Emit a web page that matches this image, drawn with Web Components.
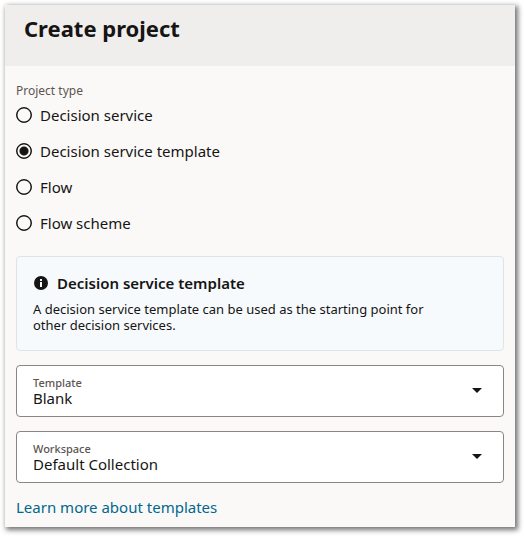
<!DOCTYPE html>
<html lang="en">
<head>
<meta charset="utf-8">
<meta name="viewport" content="width=device-width, initial-scale=1">
<title>Create project</title>
<style>
body{
    margin: 0;
    padding: 5px 9px 9px 5px;
    background: white;
    color: #161513;
    font: 15px/20px "Noto Sans", "Open Sans", sans-serif;
}
</style>
</head>
<body>
<project-drawer>
    <span slot="title">Create project</span>
    <radio-set label="Project type" name="type" value="template" items='[
        {"id": "service", "value": "Decision service"},
        {"id": "template", "value": "Decision service template"},
        {"id": "flow", "value": "Flow"},
        {"id": "scheme", "value": "Flow scheme"}
    ]'></radio-set>
    <info-box>
        <span slot="title">Decision service template</span>
        A decision service template can be used as the starting point for other decision services.
    </info-box>
    <select-field label="Template" items='["Blank"]'></select-field>
    <select-field label="Workspace" items='["Default Collection"]'></select-field>
    <help-link href="#templates">Learn more about templates</help-link>
</project-drawer>

<script>
customElements.define("project-drawer", class ProjectDrawer extends HTMLElement{
    constructor(){
        super()
        this.shadow = this.attachShadow({mode: "open"})
        this.shadow.innerHTML = `
            <style>
            :host{
                display: block;
                background: #fbf9f8;
                box-shadow: 2px 2px 5px 1px rgba(0, 0, 0, .55);
            }
            header{
                background: #f0eeed;
                padding: 7px 19px 22px;
            }
            h1{
                margin: 0;
                font-size: 22px;
                line-height: 32px;
                font-weight: 700;
            }
            main{
                display: flex;
                flex-direction: column;
                gap: 14px;
                padding: 16px 11px 10px;
            }
            </style>
            <header><h1><slot name="title"></slot></h1></header>
            <main><slot></slot></main>
            `
    }
})

customElements.define("radio-set", class RadioSet extends HTMLElement{
    constructor(){
        super()
        this.shadow = this.attachShadow({mode: "open"})
        const items = JSON.parse(this.getAttribute("items"))
        const name = this.getAttribute("name")
        const value = this.getAttribute("value")
        let rows = ""
        for(let i = 0; i < items.length; i++){
            rows += `<label><input type="radio" name="${name}" value="${items[i].id}" ${items[i].id === value ? "checked" : ""}>${items[i].value}</label>`
        }
        this.shadow.innerHTML = `
            <style>
            :host{
                display: block;
            }
            fieldset{
                margin: 0;
                padding: 0;
                border: 0;
                min-width: 0;
            }
            legend{
                padding: 0;
                font-size: 12px;
                line-height: 18px;
                color: #5b5652;
            }
            .rows{
                display: flex;
                flex-direction: column;
                align-items: flex-start;
                gap: 16px;
                padding: 5px 0 9px;
            }
            label{
                display: flex;
                align-items: center;
                gap: 8px;
            }
            input{
                --ring: radial-gradient(circle, transparent 6px, #161513 7px);
                appearance: none;
                box-sizing: border-box;
                width: 16px;
                height: 16px;
                margin: 0;
                border: 1px solid #161513;
                border-radius: 50%;
                background: var(--ring);
                &:checked{
                    background: radial-gradient(circle, #161513 4px, transparent 5px), var(--ring);
                }
            }
            </style>
            <fieldset>
                <legend>${this.getAttribute("label")}</legend>
                <div class="rows">${rows}</div>
            </fieldset>
            `
    }
})

customElements.define("info-box", class InfoBox extends HTMLElement{
    constructor(){
        super()
        this.shadow = this.attachShadow({mode: "open"})
        this.shadow.innerHTML = `
            <style>
            :host{
                display: block;
                padding: 16px 16px 17px;
                background: #f6fafd;
                border: 1px solid #dfe4e6;
                border-radius: 4px;
            }
            .head{
                display: flex;
                align-items: center;
                gap: 8px;
            }
            h2{
                margin: 0;
                font-size: 15px;
                line-height: 20px;
                font-weight: 600;
            }
            p{
                margin: 8px 0 0;
                padding-right: 48px;
                font-size: 13px;
                line-height: 16px;
            }
            </style>
            <div class="head">
                <svg width="16" height="16" viewBox="0 0 16 16" aria-hidden="true">
                    <circle cx="8" cy="8" r="7" fill="#161513"/>
                    <path d="M7 4h2v2H7zM7 7h2v5H7z" fill="#f6fafd"/>
                </svg>
                <h2><slot name="title"></slot></h2>
            </div>
            <p><slot></slot></p>
            `
    }
})

customElements.define("select-field", class SelectField extends HTMLElement{
    constructor(){
        super()
        this.shadow = this.attachShadow({mode: "open"})
        const options = JSON.parse(this.getAttribute("items")).map(item => `<option>${item}</option>`).join("")
        this.shadow.innerHTML = `
            <style>
            :host{
                display: block;
            }
            /* label, select and arrow share one cell so the whole box opens the list */
            .field{
                display: grid;
                align-items: center;
                background: white;
                border: 1px solid #8b8580;
                border-radius: 4px;
                > *{
                    grid-area: 1 / 1;
                }
            }
            label{
                align-self: start;
                justify-self: start;
                padding: 9px 16px 0;
                font-size: 11px;
                line-height: 16px;
                font-weight: 500;
                color: #5b5652;
                pointer-events: none;
                z-index: 1;
            }
            select{
                appearance: none;
                width: 100%;
                margin: 0;
                padding: 22px 48px 8px 16px;
                border: 0;
                border-radius: 4px;
                background: none;
                color: inherit;
                font: inherit;
            }
            svg{
                justify-self: end;
                margin-right: 21px;
                pointer-events: none;
            }
            </style>
            <div class="field">
                <label for="list">${this.getAttribute("label")}</label>
                <select id="list">${options}</select>
                <svg width="10" height="6" viewBox="0 0 10 6" aria-hidden="true"><path d="M0 0h10L5 5z" fill="#161513"/></svg>
            </div>
            `
    }
})

customElements.define("help-link", class HelpLink extends HTMLElement{
    constructor(){
        super()
        this.shadow = this.attachShadow({mode: "open"})
        this.shadow.innerHTML = `
            <style>
            :host{
                display: block;
            }
            a{
                color: #00688c;
                text-decoration: none;
                &:hover{
                    text-decoration: underline;
                }
            }
            </style>
            <a href="${this.getAttribute("href")}"><slot></slot></a>
            `
    }
})
</script>
</body>
</html>
